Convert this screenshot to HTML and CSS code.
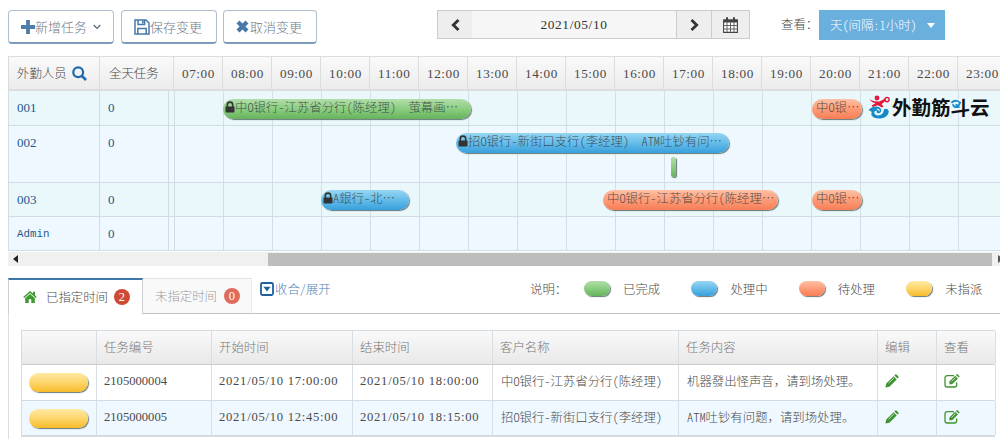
FILE: index.html
```html
<!DOCTYPE html>
<html lang="zh-CN">
<head>
<meta charset="utf-8">
<title>外勤任务排程</title>
<link rel="stylesheet" href="styles.css">
</head>
<body>
<svg class="defs" width="0" height="0">
  <symbol id="lock" viewBox="0 0 10 12"><path d="M2.3 6V3.8a2.7 2.7 0 0 1 5.4 0V6" fill="none" stroke="currentColor" stroke-width="1.6"/><rect x="0.5" y="5.4" width="9" height="6" rx="0.8" fill="currentColor"/></symbol>
  <symbol id="pencil" viewBox="0 0 14 14"><path d="M0.4 13.6 1.3 9.6 8.6 2.3 11.7 5.4 4.4 12.7ZM9.4 1.5 10.3.6Q10.9 0 11.5.6L13.4 2.5Q14 3.1 13.4 3.7L12.5 4.6Z" fill="currentColor"/><path d="M3.6 9.2 9 3.8" stroke="#fff" stroke-width=".7"/></symbol>
  <symbol id="compose" viewBox="0 0 16 14"><path d="M10 1.6H3.2A2.2 2.2 0 0 0 1 3.8v7A2.2 2.2 0 0 0 3.2 13h7.3a2.2 2.2 0 0 0 2.2-2.2V8.6" fill="none" stroke="currentColor" stroke-width="1.3"/><path d="M5.4 10.2V7.5L11.2 1.7 13.9 4.4 8.1 10.2ZM12 .9l.6-.6q.5-.4 1 0l1.7 1.7q.4.5 0 1l-.6.6Z" fill="currentColor"/><path d="M7.5 7.6 11.6 3.5" stroke="#fff" stroke-width=".7"/></symbol>
</svg>

<div class="toolbar">
  <button class="btn btn-add"><svg width="14" height="14" viewBox="0 0 14 14"><path d="M5.1 0h3.8v5.1H14v3.8H8.9V14H5.1V8.9H0V5.1h5.1Z" fill="#4e7dac"/></svg><span>新增任务</span><svg class="chev" width="8" height="6" viewBox="0 0 8 6"><path d="M.7 1 4 4.3 7.3 1" fill="none" stroke="#556575" stroke-width="1.2"/></svg></button>
  <button class="btn btn-save"><svg width="16" height="16" viewBox="0 0 16 16"><path d="M1 1h11l3 3v11H1ZM4 1v4.6h6.6V1M3.8 15V9.4h8.4V15" fill="none" stroke="#4878aa" stroke-width="1.5"/><path d="M8 1.5h1.6v3H8Z" fill="#4878aa"/></svg><span>保存变更</span></button>
  <button class="btn btn-cancel"><svg width="13" height="13" viewBox="0 0 13 13"><path d="M2 2 11 11M11 2 2 11" stroke="#4878aa" stroke-width="4.2"/></svg><span>取消变更</span></button>

  <div class="datebar">
    <span class="cell nav"><svg width="9" height="12" viewBox="0 0 9 12"><path d="M7.5 1 2.3 6l5.2 5" fill="none" stroke="#333" stroke-width="2.8"/></svg></span>
    <span class="date">2021/05/10</span>
    <span class="cell next"><svg width="9" height="12" viewBox="0 0 9 12"><path d="M1.5 1l5.2 5-5.2 5" fill="none" stroke="#333" stroke-width="2.8"/></svg></span>
    <span class="cell cal"><svg width="15" height="16" viewBox="0 0 15 16"><path d="M.6 3h13.8v12.4H.6Z" fill="#fff" stroke="#444" stroke-width="1.1"/><path d="M.6 2.6h13.8v2.8H.6ZM3 .3h2v4H3ZM10 .3h2v4h-2Z" fill="#444"/><path d="M.6 8.5h13.8M.6 12h13.8M4 5v10M7.5 5v10M11 5v10" stroke="#555" stroke-width=".9"/></svg></span>
  </div>
  <span class="view-label">查看：</span>
  <button class="view">天(间隔:1小时)<i class="caret"></i></button>
</div>

<div class="schedule">
  <div class="row head">
    <div class="h-name">外勤人员<svg width="15" height="15" viewBox="0 0 15 15"><circle cx="6.2" cy="6.2" r="4.9" fill="none" stroke="#1f69ae" stroke-width="2.2"/><path d="M9.8 9.8 14 14" stroke="#1f69ae" stroke-width="2.6"/></svg></div>
    <div class="h-all">全天任务</div>
    <div class="h-hour">07:00</div><div class="h-hour">08:00</div><div class="h-hour">09:00</div><div class="h-hour">10:00</div><div class="h-hour">11:00</div><div class="h-hour">12:00</div><div class="h-hour">13:00</div><div class="h-hour">14:00</div><div class="h-hour">15:00</div><div class="h-hour">16:00</div><div class="h-hour">17:00</div><div class="h-hour">18:00</div><div class="h-hour">19:00</div><div class="h-hour">20:00</div><div class="h-hour">21:00</div><div class="h-hour">22:00</div><div class="h-hour">23:00</div>
  </div>
  <div class="row body r1">
    <div class="who">001</div><div class="count">0</div><div class="gap"></div>
    <div class="lane">
      <div class="event green locked" style="left:48px;width:248px"><svg><use href="#lock"/></svg>中O银行-江苏省分行(陈经理)<span class="fw">　</span>萤幕画…</div>
      <div class="event orange" style="left:637px;width:50px">中O银…</div>
      <div class="brand">
        <svg class="brand-mark" width="23" height="24" viewBox="0 0 23 24"><circle cx="9" cy="3" r="2.4" fill="#e5183e"/><path d="M1 4.3 6 6.2 11.5 6.5 17.3 3.6 18 5.4 13.5 9.2 15.6 11.5 14 12.5 9.8 10.2 4.5 12 3.6 10.6 7.5 8.2 4.5 7.2Z" fill="#e5183e"/><circle cx="19" cy="4.6" r="2.1" fill="none" stroke="#e5183e" stroke-width="1.4"/><path d="M.4 15.2Q4 11 8.5 11.5 13.5 12 13.2 16 12.5 18.7 9.7 18.2 7.8 17.4 8.8 15.5 6 15.6 6.2 18.3 8 21.5 12.5 20 16 18.3 15.8 14.3 20 12.4 20.8 16.5 20.2 22.5 12.5 23.5 5.8 24 3.2 19.7 5 16 .4 15.2Z" fill="#148bc7"/><path d="M8.9 14.1Q11.8 14 11.2 16.3" fill="none" stroke="#fff" stroke-width="1"/></svg>
        <span>外勤筋斗云</span>
        <svg class="brand-swirl" width="11" height="10" viewBox="0 0 11 10"><rect width="9" height="10" fill="#eaf8fb"/><path d="M.4 3.8Q3 1 6.5 2 9.8 3.4 8 6 6 7.3 5 5.2M1.8 5.2Q3 9.3 8.6 7.7" fill="none" stroke="#148bc7" stroke-width="1.8"/></svg>
      </div>
    </div>
  </div>
  <div class="row body r2">
    <div class="who">002</div><div class="count">0</div><div class="gap"></div>
    <div class="lane">
      <div class="event blue locked" style="left:281px;width:273px"><svg><use href="#lock"/></svg>招O银行-新街口支行(李经理)<span class="fw">　</span>ATM吐钞有问…</div>
      <div class="event green second" style="left:496px;width:5px"></div>
    </div>
  </div>
  <div class="row body r3">
    <div class="who">003</div><div class="count">0</div><div class="gap"></div>
    <div class="lane">
      <div class="event blue locked" style="left:146px;width:88px"><svg><use href="#lock"/></svg>A銀行-北…</div>
      <div class="event orange" style="left:428px;width:175px">中O银行-江苏省分行(陈经理…</div>
      <div class="event orange" style="left:637px;width:50px">中O银…</div>
    </div>
  </div>
  <div class="row body r4">
    <div class="who admin">Admin</div><div class="count">0</div><div class="gap"></div>
    <div class="lane"></div>
  </div>
  <div class="scroll"><i class="arrow-l"></i><div class="thumb"></div><i class="arrow-r"></i></div>
</div>

<div class="tabs">
  <div class="tab active"><svg width="14" height="12" viewBox="0 0 14 12"><path d="M7 0 .2 6l.9 1L7 1.9 12.9 7l.9-1L12 4.3V.8h-2v1.8Z" fill="#3f9a30"/><path d="M2.2 7 7 2.9 11.8 7v5H8.3V8.3H5.7V12H2.2Z" fill="#3f9a30"/></svg><span>已指定时间</span><b>2</b></div>
  <div class="tab idle"><span>未指定时间</span><b>0</b></div>
  <div class="tabs-rest">
    <div class="toggle"><svg width="14" height="14" viewBox="0 0 14 14"><rect x="1" y="1" width="12" height="12" rx="1.4" fill="#fff" stroke="#1f5f9d" stroke-width="1.8"/><path d="M3.4 4.8h7.2L7 9.6Z" fill="#1f5f9d"/></svg>收合/展开</div>
    <div class="legend">
      <span class="legend-title">说明：</span>
      <span class="item"><i class="pill green"></i>已完成</span>
      <span class="item"><i class="pill blue"></i>处理中</span>
      <span class="item"><i class="pill orange"></i>待处理</span>
      <span class="item"><i class="pill yellow"></i>未指派</span>
    </div>
  </div>
</div>

<div class="panel">
  <div class="tasks">
    <div class="trow thead"><div></div><div>任务编号</div><div>开始时间</div><div>结束时间</div><div>客户名称</div><div>任务内容</div><div>编辑</div><div>查看</div></div>
    <div class="trow"><div class="status"><i class="pill yellow"></i></div><div class="num">2105000004</div><div class="time">2021/05/10 17:00:00</div><div class="time">2021/05/10 18:00:00</div><div>中O银行-江苏省分行(陈经理)</div><div>机器發出怪声音<span class="fw">，</span>请到场处理。</div><div class="ico"><svg width="14" height="14"><use href="#pencil"/></svg></div><div class="ico"><svg width="16" height="14"><use href="#compose"/></svg></div></div>
    <div class="trow alt"><div class="status"><i class="pill yellow"></i></div><div class="num">2105000005</div><div class="time">2021/05/10 12:45:00</div><div class="time">2021/05/10 18:15:00</div><div>招O银行-新街口支行(李经理)</div><div>ATM吐钞有问题<span class="fw">，</span>请到场处理。</div><div class="ico"><svg width="14" height="14"><use href="#pencil"/></svg></div><div class="ico"><svg width="16" height="14"><use href="#compose"/></svg></div></div>
  </div>
</div>
</body>
</html>
```

FILE: styles.css
```css
* { box-sizing: border-box; }
body {
  margin: 0;
  width: 1000px;
  height: 439px;
  overflow: hidden;
  background: #fff;
  color: #4a4a4a;
  font-family: "Noto Sans CJK SC", sans-serif;
  font-feature-settings: "hwid";
  font-size: 12.4px;
  font-weight: 300;
  line-height: 18px;
}
.defs { position: absolute; }
svg { display: block; flex: none; }
.fw { font-feature-settings: normal; }

/* Toolbar */
.toolbar { display: flex; align-items: flex-start; height: 56px; padding: 10px 0 0 8px; }
.btn {
  display: flex;
  align-items: center;
  height: 34px;
  padding: 0 0 0 12px;
  border: 1px solid #aec0d0;
  border-bottom: 2px solid #7c9cbb;
  border-radius: 4px;
  background: #fff;
  color: #6f7b89;
  font: inherit;
  font-size: 13px;
  font-feature-settings: inherit;
}
.btn-add { width: 106px; margin-right: 7px; }
.btn-save { width: 96px; margin-right: 6px; }
.btn-cancel { width: 94px; }
.btn-cancel span { margin-left: 1px; }
.btn .chev { margin-left: 6px; }

.datebar {
  display: flex;
  width: 313px;
  height: 29px;
  margin-left: 120px;
  border: 1px solid #ccc;
  background: #f6f6f6;
}
.cell { display: flex; align-items: center; justify-content: center; background: #eee; }
.nav { width: 34px; }
.next { width: 35px; border-left: 1px solid #ccc; }
.cal { width: 38px; border-left: 1px solid #ccc; }
.date {
  flex: 1;
  text-align: center;
  color: #333;
  font: 13.4px/27px "Liberation Serif", serif;
  letter-spacing: .6px;
}
.view-label { margin: 5px 0 0 31px; width: 38px; white-space: nowrap; }
.view {
  display: flex;
  align-items: center;
  justify-content: space-between;
  width: 126px;
  height: 30px;
  padding: 0 10px 0 11px;
  border: 0;
  background: #69b0df;
  color: #fff;
  font: inherit;
  font-feature-settings: inherit;
}
.caret { border: 4px solid transparent; border-top: 5px solid #fff; border-bottom: 0; }

/* Schedule */
.schedule { margin-left: 8px; overflow: hidden; }
.row { display: grid; border-left: 1px solid #d5dde2; }
.head {
  grid-template-columns: 91px 74px repeat(17, 49px);
  height: 35px;
  border-top: 1px solid #ddd;
  border-bottom: 2px solid #dcdcdc;
  background: linear-gradient(#fafafa, #ececec);
}
.head > div { line-height: 33px; border-right: 1px solid #ddd; }
.head .h-name { display: flex; align-items: center; gap: 5px; padding-left: 8px; }
.h-all { padding-left: 9px; }
.head .h-hour {
  padding-left: 8px;
  font-family: "Liberation Serif", serif;
  font-size: 13.2px;
  letter-spacing: .55px;
}
.body { grid-template-columns: 91px 69px 6px 1fr; border-bottom: 1px solid #cfdde3; background: #eaf8fb; }
.r1 { height: 35px; }
.r2 { height: 57px; background: #eff8ff; }
.r3 { height: 34px; }
.r4 { height: 34px; background: #eff8ff; }
.who, .count, .gap { border-right: 1px solid #cfdce4; }
.who, .count {
  padding: 8px 0 0 8px;
  color: #22598b;
  font-family: "Liberation Serif", serif;
  font-size: 13px;
}
.admin { font-family: "Liberation Mono", monospace; font-size: 10.8px; }
.lane {
  position: relative;
  background: repeating-linear-gradient(90deg, transparent 0 48px, #d3dfe6 48px 49px);
}
.green { background: linear-gradient(#b2dda9, #8bcd80 50%, #66b35d); }
.blue { background: linear-gradient(#96d6f2, #65bcea 50%, #38a0dc); }
.orange { background: linear-gradient(#ffc0a4, #fd9c78 50%, #f77d55); }
.yellow { background: linear-gradient(#ffe9a2, #fdd66c 50%, #f8bb28); }
.event, .pill { box-shadow: 1px 1px 1px #68787a; }
.event {
  position: absolute;
  top: 8px;
  height: 20px;
  padding-left: 2px;
  overflow: hidden;
  border-radius: 10px;
  color: rgba(48, 58, 62, .85);
  line-height: 17px;
  white-space: nowrap;
  display: flex;
}
.event.orange { padding-left: 4px; }
.r2 .event, .r3 .event { top: 7px; }
.r2 .event.second { top: 31px; border-radius: 2px; padding: 0; }
.event svg { width: 10px; height: 12px; margin-top: 2px; color: #333; }
.brand {
  position: absolute;
  left: 693px;
  top: 4px;
  display: flex;
  color: #111;
  font-size: 19.5px;
  font-weight: 700;
  line-height: 24px;
}
.brand span { margin-left: 1px; white-space: nowrap; }
.brand-swirl { position: absolute; left: 83px; top: 4px; }
.scroll { display: flex; align-items: center; height: 14px; margin-top: 1px; background: #f0f0f0; }
.arrow-l { margin-left: 5px; border: 4px solid transparent; border-left: 0; border-right: 5px solid #222; }
.thumb { flex: none; width: 724px; height: 13px; margin-left: 250px; background: #bdbdbd; }
.arrow-r { margin-left: 6px; border: 4px solid transparent; border-right: 0; border-left: 5px solid #555; }

/* Tabs and legend */
.tabs { display: flex; height: 36px; margin: 12px 0 0 8px; }
.tab { display: flex; flex: none; align-items: center; border-right: 1px solid #ccd0d5; }
.tab span { white-space: nowrap; }
.tab b {
  flex: none;
  width: 16px;
  height: 16px;
  border-radius: 50%;
  background: #cf4a35;
  color: #fff;
  font: 12.4px/16px "Liberation Serif", serif;
  text-align: center;
}
.active { width: 135px; padding-left: 14px; border-top: 2px solid #3b77aa; border-left: 1px solid #ccd0d5; }
.active span { margin: 0 6px 0 9px; }
.idle { width: 109px; padding-left: 12px; border-top: 1px solid #e3e3e3; border-right-color: #eee; border-bottom: 1px solid #bcc3c9; background: #f9f9f9; color: #999; }
.idle span { margin-right: 7px; }
.idle b { background: #df6b5b; }
.tabs-rest { display: flex; flex: 1; min-width: 0; border-bottom: 1px solid #bcc3c9; }
.toggle { display: flex; flex: none; width: 278px; padding: 2px 0 0 8px; color: #4f83b6; }
.toggle svg { margin: 2px 1px 0 0; }
.legend { display: flex; flex: none; height: 21px; align-items: center; }
.legend-title { width: 54px; white-space: nowrap; }
.item { display: flex; align-items: center; width: 107.4px; white-space: nowrap; }
.item:last-child { width: auto; }
.pill { display: block; width: 26px; height: 15px; margin-right: 13px; border-radius: 8px; }

/* Task table */
.panel { height: 126px; margin-left: 8px; padding: 16px 0 0 12px; border-left: 1px solid #ddd; }
.tasks { width: 974px; border: 1px solid #d5dce1; border-right: 0; }
.trow {
  display: grid;
  grid-template-columns: 75px 115px 141px 140px 186px 199px 59px 59px;
  height: 36px;
  border-bottom: 1px solid #d0dbe2;
}
.trow > div { padding-left: 8px; border-right: 1px solid #d8dfe4; line-height: 33px; white-space: nowrap; }
.trow.thead { height: 34px; border-bottom: 1px solid #ccc; background: linear-gradient(#f9f9f9, #e9e9e9); color: #787878; }
.trow.thead > div { padding-left: 7px; }
.trow.alt { height: 35px; background: #eff8ff; }
.trow .num, .trow .time { padding-left: 7px; font-family: "Liberation Serif", serif; font-size: 12.6px; }
.trow .time { letter-spacing: .74px; }
.trow .status { padding: 8px 0 0 7px; }
.status .pill { width: 59px; height: 19px; border-radius: 10px; }
.trow .ico { padding-top: 9px; padding-left: 7px; color: #409332; }
```
